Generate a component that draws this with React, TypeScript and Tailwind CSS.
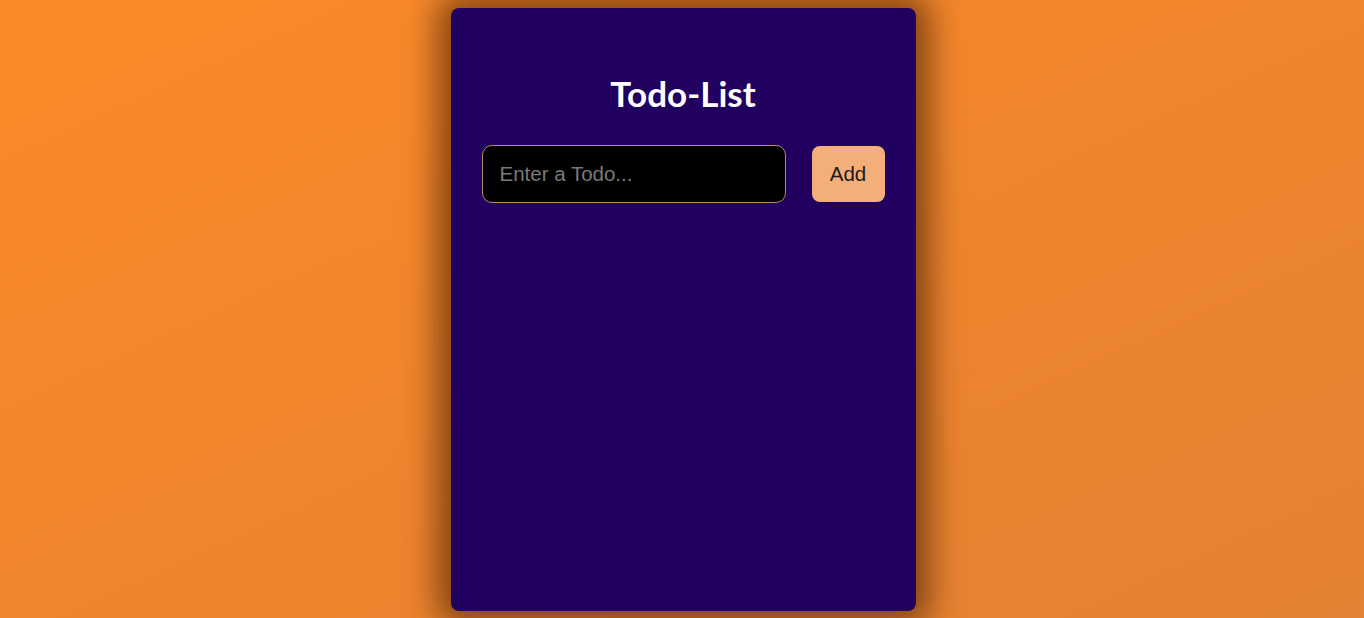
import React, { useState } from "react";

export default function App() {
  const [todo, setTodo] = useState("");
  const [todos, setTodos] = useState<string[]>([]);

  const addTodo = () => {
    if (!todo.trim()) return;
    setTodos([...todos, todo.trim()]);
    setTodo("");
  };

  return (
    <div className="min-h-screen w-full bg-gradient-to-br from-[#fb8a28] to-[#e48132] flex justify-center font-['Liberation_Sans',Arial,sans-serif]">
      <div className="mt-2 ml-[2px] w-[465px] h-[603px] bg-[#22005f] rounded-lg shadow-[0_0_32px_14px_rgba(60,25,0,0.6)] px-[31px] pt-[62px]">
        <h1 className="text-center text-white text-[35px] leading-[46px] font-bold font-['Lato','Open_Sans',sans-serif]">Todo-List</h1>
        <div className="mt-[29px] flex items-center gap-[26px]">
          <input
            value={todo}
            onChange={(e) => setTodo(e.target.value)}
            placeholder="Enter a Todo..."
            className="flex-1 h-[58px] bg-black rounded-[10px] border border-[#b88c5e] px-[17px] text-[20.5px] text-white placeholder:text-[#7a7a7a] outline-none"
          />
          <button
            onClick={addTodo}
            className="w-[73px] h-[56px] bg-[#f4ae7a] rounded-lg text-[20.5px] text-[#1a1a1a]"
          >
            Add
          </button>
        </div>
        <ul className="mt-6 space-y-2">
          {todos.map((t, i) => (
            <li key={i} className="text-white text-lg">{t}</li>
          ))}
        </ul>
      </div>
    </div>
  );
}
